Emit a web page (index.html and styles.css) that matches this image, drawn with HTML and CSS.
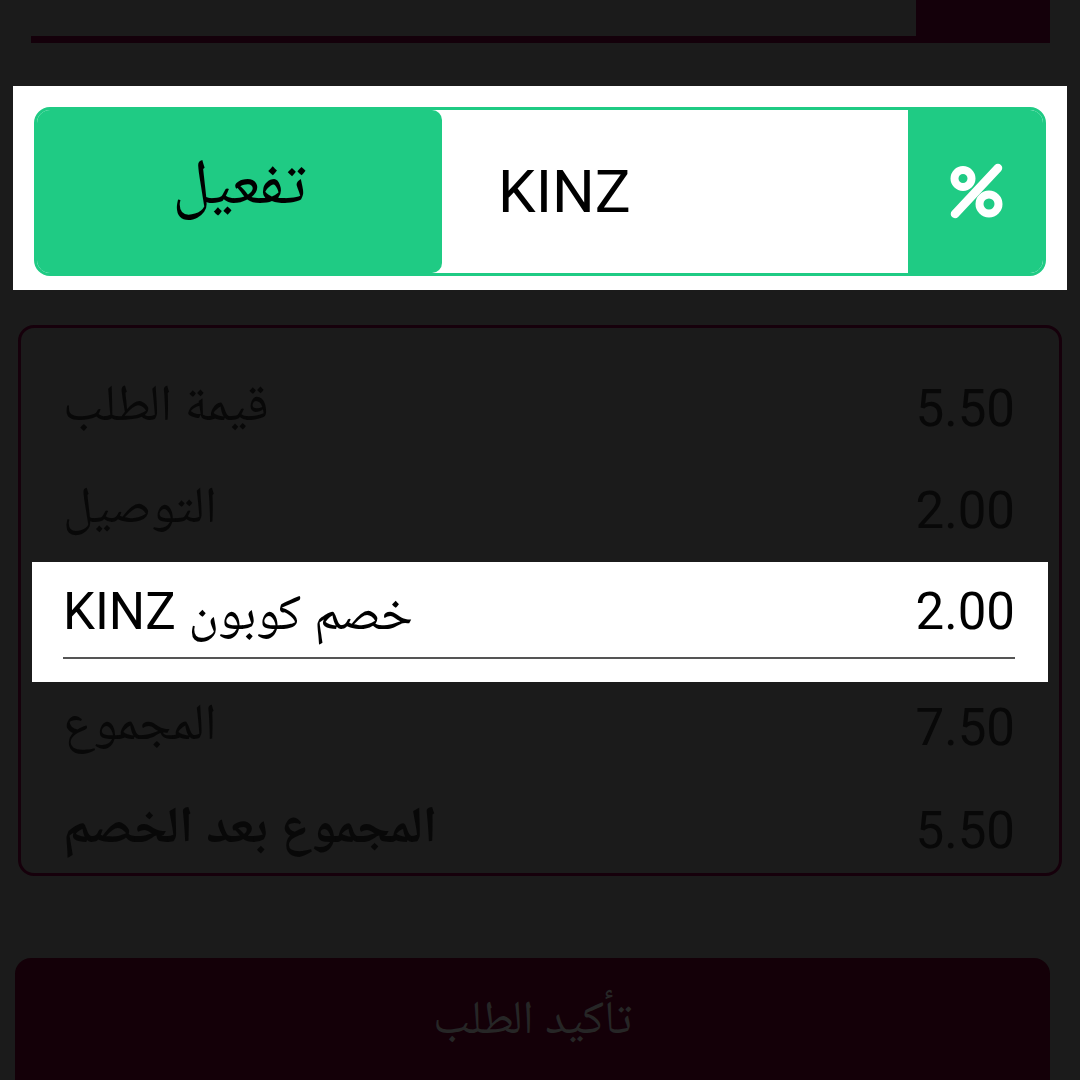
FILE: index.html
```html
<!DOCTYPE html>
<html lang="ar">

<head>
    <meta charset="UTF-8">
    <meta name="viewport" content="width=device-width, initial-scale=1.0">
    <title>تأكيد الطلب</title>
    <link rel="stylesheet" href="styles.css">
</head>

<body>
    <div class="endereco">
        <div class="endereco-campo"></div>
        <div class="endereco-botao"></div>
    </div>

    <div class="destaque cupom-destaque">
        <div class="cupom">
            <button class="cupom-ativar">تفعيل</button>
            <div class="cupom-codigo">KINZ</div>
            <div class="cupom-icone">
                <svg width="60" height="60" viewBox="0 0 60 60">
                    <circle cx="17" cy="16.5" r="8.5" fill="none" stroke="#fff" stroke-width="8" />
                    <circle cx="43" cy="42" r="9.5" fill="none" stroke="#fff" stroke-width="8" />
                    <line x1="52" y1="6" x2="9" y2="52" stroke="#fff" stroke-width="8.5" stroke-linecap="round" />
                </svg>
            </div>
        </div>
    </div>

    <div class="resumo">
        <div class="linha">
            <span class="rotulo" dir="rtl">قيمة الطلب</span>
            <span class="valor">5.50</span>
        </div>
        <div class="linha linha-2">
            <span class="rotulo" dir="rtl">التوصيل</span>
            <span class="valor">2.00</span>
        </div>
        <div class="linha-ativa">
            <div class="linha">
                <span class="rotulo" dir="rtl">خصم كوبون KINZ</span>
                <span class="valor">2.00</span>
            </div>
        </div>
        <div class="linha linha-4">
            <span class="rotulo" dir="rtl">المجموع</span>
            <span class="valor">7.50</span>
        </div>
        <div class="linha linha-5">
            <span class="rotulo negrito" dir="rtl">المجموع بعد الخصم</span>
            <span class="valor">5.50</span>
        </div>
    </div>

    <button class="confirmar">تأكيد الطلب</button>
</body>

</html>
```

FILE: styles.css
```css
body {
    margin: 0;
    width: 1080px;
    height: 1080px;
    overflow: hidden;
    background-color: #1b1b1b;
    font-family: Roboto, "Noto Naskh Arabic", "DejaVu Sans", sans-serif;
}

.endereco {
    display: flex;
    height: 43px;
    margin: 0 30px 0 31px;
}

.endereco-campo {
    flex: 1;
    border-bottom: 7px solid #14000a;
}

.endereco-botao {
    width: 134px;
    background-color: #14000a;
}

.destaque {
    background-color: #fff;
}

.cupom-destaque {
    margin: 43px 0 0 13px;
    width: 1054px;
    height: 204px;
    box-sizing: border-box;
    padding: 21px 21px 14px;
}

.cupom {
    display: flex;
    height: 169px;
    box-sizing: border-box;
    border: 3px solid #1fcb84;
    border-radius: 16px;
    overflow: hidden;
}

.cupom-ativar {
    width: 405px;
    border: 0;
    border-radius: 10px;
    background-color: #1fcb84;
    color: #000;
    font-family: inherit;
    font-size: 64px;
    padding: 0 0 4px;
}

.cupom-codigo {
    flex: 1;
    display: flex;
    align-items: center;
    padding-left: 56px;
    font-size: 60px;
    color: #000;
}

.cupom-icone {
    width: 135px;
    display: flex;
    justify-content: center;
    align-items: center;
    background-color: #1fcb84;
    border-radius: 0 12px 12px 0;
}

.resumo {
    margin: 35px 0 0 18px;
    width: 1044px;
    height: 551px;
    box-sizing: border-box;
    border: 3px solid #16000b;
    border-radius: 16px;
    padding-top: 44px;
}

.linha {
    display: flex;
    justify-content: space-between;
    align-items: center;
    height: 72px;
    margin: 0 11px;
    padding: 0 33px 0 31px;
    font-size: 51px;
    color: #080808;
}

.linha-2 {
    margin-top: 30px;
}

.linha-ativa {
    background-color: #fff;
    margin: 16px 11px 0;
    padding: 14px 33px 23px 31px;
}

.linha-ativa .linha {
    margin: 0;
    padding: 0;
    color: #000;
    border-bottom: 2px solid #555;
    align-items: flex-start;
    line-height: 72px;
    box-sizing: content-box;
    height: 81px;
}

.linha-4 {
    margin-top: 9px;
}

.linha-5 {
    margin-top: 31px;
}

.negrito {
    font-weight: bold;
}

.confirmar {
    display: block;
    margin: 82px 0 0 15px;
    width: 1035px;
    height: 160px;
    border: 0;
    border-radius: 16px;
    background-color: #140008;
    color: #262626;
    font-family: inherit;
    font-size: 47px;
    padding-bottom: 32px;
}
```
